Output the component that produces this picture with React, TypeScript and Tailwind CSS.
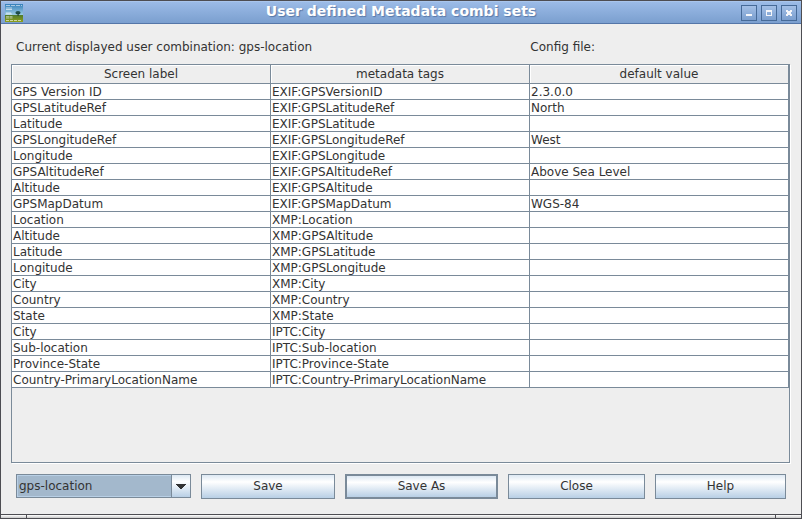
import React, { useState } from "react";

type Row = { label: string; tag: string; value?: string };

const rows: Row[] = [
  { label: "GPS Version ID", tag: "EXIF:GPSVersionID", value: "2.3.0.0" },
  { label: "GPSLatitudeRef", tag: "EXIF:GPSLatitudeRef", value: "North" },
  { label: "Latitude", tag: "EXIF:GPSLatitude" },
  { label: "GPSLongitudeRef", tag: "EXIF:GPSLongitudeRef", value: "West" },
  { label: "Longitude", tag: "EXIF:GPSLongitude" },
  { label: "GPSAltitudeRef", tag: "EXIF:GPSAltitudeRef", value: "Above Sea Level" },
  { label: "Altitude", tag: "EXIF:GPSAltitude" },
  { label: "GPSMapDatum", tag: "EXIF:GPSMapDatum", value: "WGS-84" },
  { label: "Location", tag: "XMP:Location" },
  { label: "Altitude", tag: "XMP:GPSAltitude" },
  { label: "Latitude", tag: "XMP:GPSLatitude" },
  { label: "Longitude", tag: "XMP:GPSLongitude" },
  { label: "City", tag: "XMP:City" },
  { label: "Country", tag: "XMP:Country" },
  { label: "State", tag: "XMP:State" },
  { label: "City", tag: "IPTC:City" },
  { label: "Sub-location", tag: "IPTC:Sub-location" },
  { label: "Province-State", tag: "IPTC:Province-State" },
  { label: "Country-PrimaryLocationName", tag: "IPTC:Country-PrimaryLocationName" },
];

const columns = ["Screen label", "metadata tags", "default value"];

function AppIcon() {
  return (
    <svg width="18" height="18" viewBox="0 0 18 18" aria-hidden="true">
      <defs>
        <linearGradient id="sky" x1="0" y1="0" x2="0" y2="1">
          <stop offset="0" stopColor="#3580bb" />
          <stop offset="1" stopColor="#9ccbe2" />
        </linearGradient>
        <linearGradient id="field" x1="0" y1="0" x2="0" y2="1">
          <stop offset="0" stopColor="#4f7a2c" />
          <stop offset="1" stopColor="#8fa01c" />
        </linearGradient>
      </defs>
      <rect width="18" height="11" fill="url(#sky)" />
      <rect y="11" width="18" height="7" fill="url(#field)" />
      <ellipse cx="13" cy="8.7" rx="2.6" ry="1.8" fill="#1f4f4c" />
      <path d="M12.6 9h1v3h-1z" fill="#23402a" />
      <path d="M1 1.5h16" stroke="#ffffff" strokeOpacity="0.55" strokeDasharray="4 1" />
      <path d="M1 4h6M1 5.5h6M1 9h5M1 10h6" stroke="#ffffff" strokeOpacity="0.6" />
      <path d="M1 12.7h7M1 14h7" stroke="#ffffff" strokeOpacity="0.55" strokeDasharray="3 0.5" />
      <path d="M1 16.5h15" stroke="#ffffff" strokeOpacity="0.6" strokeDasharray="3 1" />
    </svg>
  );
}

function WindowButton({ label, children }: { label: string; children: React.ReactNode }) {
  return (
    <button
      type="button"
      aria-label={label}
      className="flex size-4 items-center justify-center border border-[#466a98] bg-linear-to-b from-[#a3bfe6] to-[#7b9fcf]"
    >
      <svg width="14" height="14" viewBox="0 0 14 14" className="shrink-0" shapeRendering="crispEdges" aria-hidden="true">
        {children}
      </svg>
    </button>
  );
}

function ActionButton({ children, isDefault = false }: { children: string; isDefault?: boolean }) {
  return (
    <button
      type="button"
      className={
        "h-[25px] border-[#7a8a99] bg-linear-to-b from-[#dde8f3] via-white via-30% to-[#b8cfe5] text-center leading-[15px] " +
        (isDefault ? "border-2" : "border")
      }
    >
      {children}
    </button>
  );
}

export default function App() {
  const [combination, setCombination] = useState("gps-location");

  return (
    <div className="flex min-h-screen flex-col border border-[#4d4d52] bg-[#eeeeee] font-['DejaVu_Sans',sans-serif] text-xs text-[#333333]">
      <header className="flex h-[23px] items-center border-t border-b border-t-[#a9c5ec] border-b-[#5476a8] bg-linear-to-b from-[#9bbbe7] to-[#7b9fcf] pr-1 pl-1">
        <div className="w-14">
          <AppIcon />
        </div>
        <h1 className="flex-1 pb-[3px] text-center text-sm leading-4 font-bold text-white [text-shadow:1px_1px_1px_#5878a8]">
          User defined Metadata combi sets
        </h1>
        <div className="flex w-14 gap-1">
          <WindowButton label="Minimize">
            <path d="M4 8h6v2H4z" fill="#f4f6fa" />
          </WindowButton>
          <WindowButton label="Maximize">
            <path d="M4 4h6v6H4zM5 6v3h4V6z" fill="#f4f6fa" fillRule="evenodd" />
          </WindowButton>
          <WindowButton label="Close window">
            <path d="M4 4h2v1h2V4h2v2H9v2h1v2H8V9H6v1H4V8h1V6H4z" fill="#f4f6fa" />
          </WindowButton>
        </div>
      </header>

      <main className="flex flex-1 flex-col pr-[11px] pl-[10px]">
        <div className="grid h-10 grid-cols-3 items-center pt-[5px]">
          <p className="col-span-2 pl-[5px]">Current displayed user combination: {combination}</p>
          <p>Config file:</p>
        </div>

        <div className="flex-1 border border-[#7a8a99] shadow-[1px_1px_0_#ffffff]">
          <table className="w-full table-fixed border-separate border-spacing-0">
            <thead>
              <tr>
                {columns.map((name) => (
                  <th
                    key={name}
                    scope="col"
                    className="h-[19px] border-r border-b border-[#7a8a99] p-0 pt-px text-center leading-[15px] font-normal shadow-[inset_1px_1px_0_#ffffff]"
                  >
                    {name}
                  </th>
                ))}
              </tr>
            </thead>
            <tbody>
              {rows.map((row) => (
                <tr key={row.tag} className="bg-white">
                  {[row.label, row.tag, row.value].map((text, i) => (
                    <td
                      key={columns[i]}
                      className="h-4 border-r border-b border-[#7a8a99] p-0 pt-px pl-px leading-[14px] whitespace-nowrap"
                    >
                      {text}
                    </td>
                  ))}
                </tr>
              ))}
            </tbody>
          </table>
        </div>

        <div className="grid grid-cols-[175fr_134fr_153fr_137fr_131fr] gap-[10px] pt-[11px] pr-1 pb-[15px] pl-[5px]">
          <div className="relative h-6 border border-[#7a8a99]">
            <select
              aria-label="User combination"
              value={combination}
              onChange={(e) => setCombination(e.target.value)}
              className="block h-full w-full appearance-none border border-[#b8cfe5] bg-[#a3b8cc] pl-px leading-5 outline-none"
            >
              <option>gps-location</option>
            </select>
            <span className="pointer-events-none absolute inset-y-0 right-0 flex w-[19px] items-center justify-center border-l border-[#7a8a99] bg-linear-to-b from-[#dde8f3] via-white via-30% to-[#b8cfe5]">
              <svg width="10" height="5" viewBox="0 0 10 5" shapeRendering="crispEdges" aria-hidden="true">
                <path d="M0 0h10v1H9v1H8v1H7v1H6v1H4V4H3V3H2V2H1V1H0z" fill="#333333" />
              </svg>
            </span>
          </div>
          <ActionButton>Save</ActionButton>
          <ActionButton isDefault>Save As</ActionButton>
          <ActionButton>Close</ActionButton>
          <ActionButton>Help</ActionButton>
        </div>
      </main>

      <footer className="flex h-1 border-t border-[#4d4d52] bg-linear-to-b from-white to-[#c8c8c8]">
        <div className="w-[26px] border-r border-[#4d4d52]" />
        <div className="flex-1" />
        <div className="w-[26px] border-l border-[#4d4d52]" />
      </footer>
    </div>
  );
}
